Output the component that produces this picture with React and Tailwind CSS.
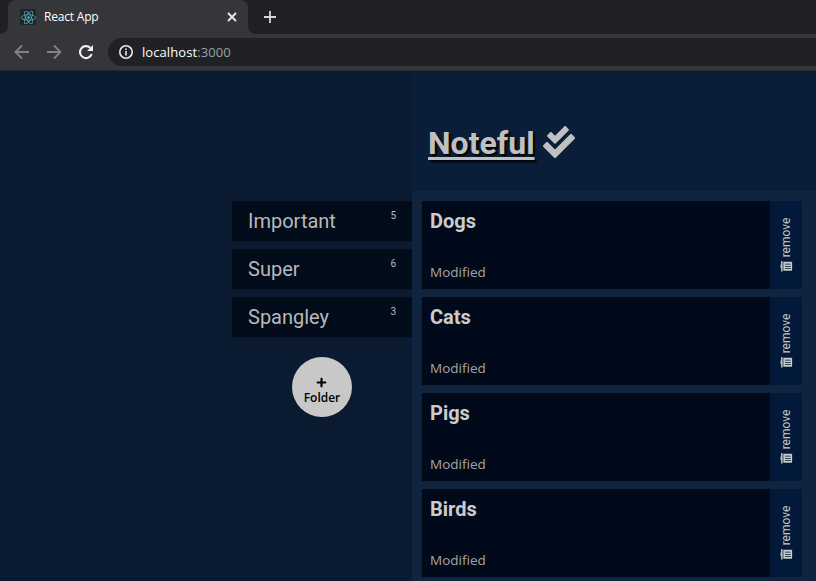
import { FaCheckDouble, FaTrashAlt, FaPlus, FaReact } from "react-icons/fa";

const folders = [
  { name: "Important", count: 5 },
  { name: "Super", count: 6 },
  { name: "Spangley", count: 3 },
];

const notes = ["Dogs", "Cats", "Pigs", "Birds"];

function BrowserChrome() {
  return (
    <header className="h-[71px] shrink-0 border-b border-[#27292c] bg-[#35363a] font-['Open_Sans',sans-serif]">
      <div className="flex h-[34px] bg-[#202124]">
        <div className="w-2 bg-[#35363a]">
          <div className="h-full rounded-br-lg bg-[#202124]" />
        </div>
        <div className="flex w-60 items-center rounded-t-lg bg-[#35363a] pr-[11px] pl-3">
          <span className="flex size-4 items-center justify-center rounded-xs bg-[#222426]">
            <FaReact className="size-[15px] text-[#4fb6cc]" />
          </span>
          <span className="ml-2 flex-1 text-[12px] tracking-[-0.2px] text-white">React App</span>
          <svg className="size-[10px]" viewBox="0 0 10 10" fill="none" stroke="#e8eaed" strokeWidth="1.8">
            <path d="M1 1l8 8M9 1L1 9" />
          </svg>
        </div>
        <div className="w-2 bg-[#35363a]">
          <div className="h-full rounded-bl-lg bg-[#202124]" />
        </div>
        <svg className="mt-[11px] ml-2 size-3" viewBox="0 0 12 12" fill="none" stroke="#d5d6d9" strokeWidth="1.8">
          <path d="M6 0v12M0 6h12" />
        </svg>
      </div>
      <div className="flex h-9 items-center pl-[14px]">
        <svg className="size-4" viewBox="0 0 16 16" fill="none" stroke="#828387" strokeWidth="1.8">
          <path d="M15 8H2M8 1.5L1.5 8 8 14.5" />
        </svg>
        <svg className="ml-4 size-4" viewBox="0 0 16 16" fill="none" stroke="#828387" strokeWidth="1.8">
          <path d="M1 8h13M8 1.5L14.500 8 8 14.500" />
        </svg>
        <svg className="ml-4 size-4" viewBox="0 0 16 16" fill="none" stroke="#f1f3f4" strokeWidth="2.100">
          <path d="M13.700 10a6 6 0 1 1-1.500-6.200" />
          <path d="M15 1v6H9z" fill="#f1f3f4" stroke="none" />
        </svg>
        <div className="ml-[14px] flex h-7 flex-1 items-center rounded-l-full bg-[#202124] pl-[11px]">
          <svg className="size-[14px]" viewBox="0 0 14 14" fill="none" stroke="#e8eaed" strokeWidth="1.600">
            <circle cx="7" cy="7" r="6.200" />
            <path d="M7 6v4.500M7 3.400V5" />
          </svg>
          <span className="mt-px ml-[9px] text-[13px] tracking-[0.08px] text-white">
            localhost<span className="text-[#9aa0a6]">:3000</span>
          </span>
        </div>
      </div>
    </header>
  );
}

function Sidebar() {
  return (
    <nav className="flex w-[412px] flex-col items-end bg-[#0a1a30] pt-[130px]">
      <ul className="flex w-[180px] flex-col gap-2">
        {folders.map((folder) => (
          <li key={folder.name} className="flex h-10 justify-between bg-[#020c1b] pr-4 pl-4 text-[#b9b9b9]">
            <span className="text-[20px] leading-10">{folder.name}</span>
            <span className="mt-[7px] text-[10px] leading-4">{folder.count}</span>
          </li>
        ))}
      </ul>
      <button className="mt-5 mr-[60px] flex size-[60px] flex-col items-center rounded-full bg-[#c8c8c8] pt-5 font-['Open_Sans',sans-serif] text-[12px] leading-4 font-semibold text-black">
        <FaPlus className="mr-px size-[11px]" />
        <span className="mt-0.5">Folder</span>
      </button>
    </nav>
  );
}

function Note({ title }) {
  return (
    <li className="flex h-[88px] bg-[#000a1a]">
      <div className="flex flex-1 flex-col justify-between px-2 pt-[5px] pb-[7px]">
        <h2 className="text-[20px] leading-[30px] font-bold text-[#cccccc]">{title}</h2>
        <p className="font-['Open_Sans',sans-serif] text-[13.500px] leading-5 text-[#a5a6a8]">Modified</p>
      </div>
      <button className="flex w-8 items-center justify-center bg-[#03193a] text-[#c8c8c8]">
        <span className="flex -rotate-90 items-center gap-[3px] text-[12px] leading-4">
          <FaTrashAlt className="size-3" />
          remove
        </span>
      </button>
    </li>
  );
}

export default function App() {
  return (
    <div className="flex h-[581px] w-[816px] flex-col overflow-hidden font-[Roboto,sans-serif]">
      <BrowserChrome />
      <div className="flex min-h-0 flex-1">
        <Sidebar />
        <main className="flex-1 bg-[#10243f]">
          <div className="flex h-[120px] items-center gap-2 bg-[#0b1e39] pt-6 pl-4 text-[32px] text-[#c0c0c0]">
            <h1 className="font-bold underline decoration-[3px] underline-offset-[3px] [text-shadow:2px_2px_2px_#000]">Noteful</h1>
            <FaCheckDouble className="mb-0.5 size-8" />
          </div>
          <ul className="flex flex-col gap-2 pt-[10px] pr-[14px] pl-[10px]">
            {notes.map((title) => (
              <Note key={title} title={title} />
            ))}
          </ul>
        </main>
      </div>
    </div>
  );
}
